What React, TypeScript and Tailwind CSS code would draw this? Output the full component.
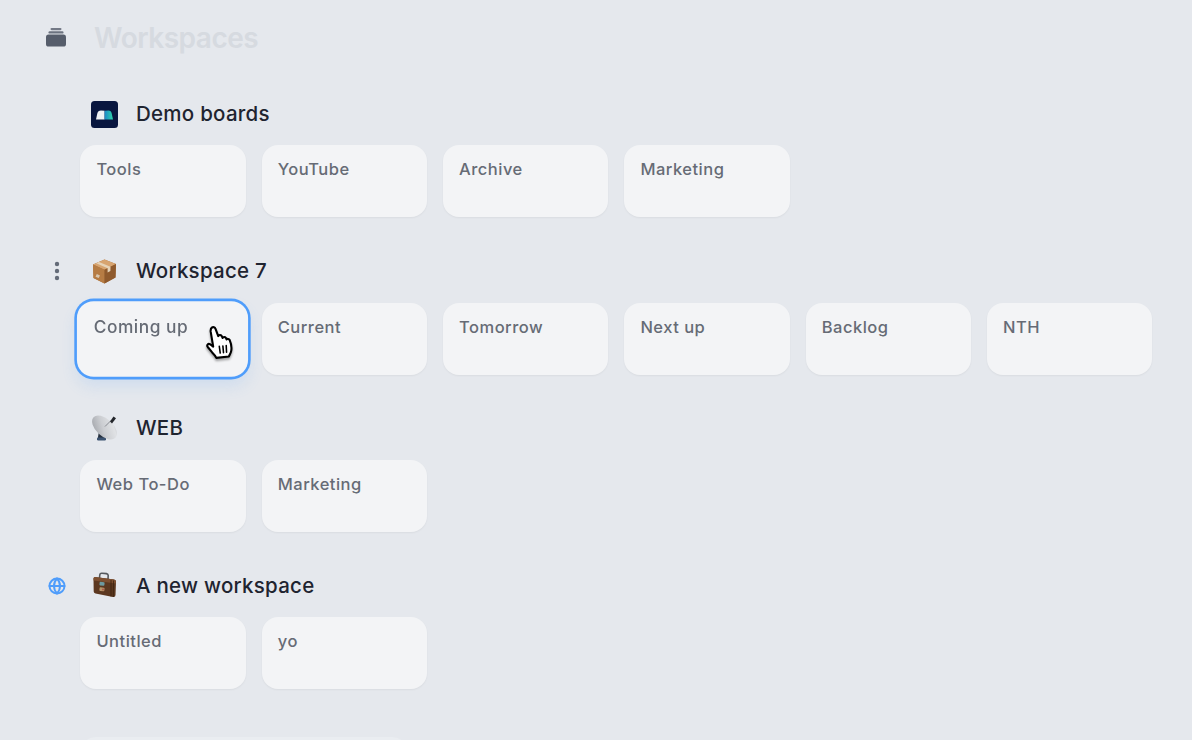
import { Globe } from 'lucide-react';
import type { ReactNode } from 'react';

const StackIcon = () => (
    <svg width="20" height="20" viewBox="0 0 20 20" className="text-[#565d6b]">
        <rect x="4.5" y="0" width="11" height="2.2" rx="1.1" fill="currentColor" opacity="0.8" />
        <rect x="2.5" y="3.2" width="15" height="2.4" rx="1.2" fill="currentColor" opacity="0.85" />
        <rect x="0" y="6.6" width="20" height="12" rx="2.6" fill="currentColor" />
    </svg>
);

const DotsIcon = () => (
    <svg width="6" height="20" viewBox="0 0 6 20" className="text-[#646b78]">
        <circle cx="3" cy="3" r="2.2" fill="currentColor" />
        <circle cx="3" cy="10" r="2.2" fill="currentColor" />
        <circle cx="3" cy="17" r="2.2" fill="currentColor" />
    </svg>
);

const BookLogo = () => (
    <svg width="27" height="27" viewBox="0 0 27 27">
        <defs>
            <linearGradient id="bookTeal" x1="0" y1="0" x2="1" y2="0">
                <stop offset="0" stopColor="#1e88c8" />
                <stop offset="1" stopColor="#2dd4a8" />
            </linearGradient>
        </defs>
        <rect width="27" height="27" rx="3.5" fill="#08163f" />
        <path d="M5 18.5 Q5.8 15 6.3 12.6 Q6.9 9.4 10 9.4 L13.6 9.8 L13.6 18.5 Z" fill="#eef1f4" />
        <path d="M13.6 9.8 L17.4 9.4 Q20.2 9.4 20.7 12.6 Q21.2 15 22 18.5 L13.6 18.5 Z" fill="url(#bookTeal)" />
    </svg>
);

const BoxEmoji = () => (
    <svg width="27" height="27" viewBox="0 0 27 27">
        <path d="M13.5 1.5 L25 6 L24.5 19.5 L13.5 25.5 L2.5 20 L2 6.5 Z" fill="#a9713d" />
        <path d="M2 6.5 L13.5 11.8 L25 6 L13.5 1.5 Z" fill="#d7a470" />
        <path d="M2 6.5 L13.5 11.8 L13.5 25.5 L2.5 20 Z" fill="#b67c44" />
        <path d="M13.5 11.8 L25 6 L24.5 19.5 L13.5 25.5 Z" fill="#8f5a2d" />
        <path d="M8 4 L19.5 8.8 L19.4 13 L16.6 14.4 L16.6 10.2 L5.2 5.2 Z" fill="#e6d3b8" />
        <rect x="5" y="16.5" width="3.5" height="3" fill="#d9c7ae" transform="rotate(25 6.7 18)" />
    </svg>
);

const DishEmoji = () => (
    <svg width="27" height="27" viewBox="0 0 27 27">
        <defs>
            <linearGradient id="dishFill" x1="0" y1="1" x2="1" y2="0">
                <stop offset="0" stopColor="#9a9da3" />
                <stop offset="0.45" stopColor="#cbcdd1" />
                <stop offset="0.8" stopColor="#e0e2e5" />
                <stop offset="1" stopColor="#b4b7bc" />
            </linearGradient>
        </defs>
        <path d="M8 16 L6.5 25 L14.5 25 L13.5 18 Z" fill="#26303e" />
        <rect x="6" y="22.5" width="9" height="3" rx="1.2" fill="#3b5270" />
        <ellipse cx="13.5" cy="12.5" rx="15" ry="8.5" transform="rotate(43 13.5 12.5)" fill="url(#dishFill)" />
        <path d="M14 11.5 L20.5 5" stroke="#7d8086" strokeWidth="0.9" />
        <path d="M19 6.5 L22.5 1.5 L25 3.3 L21 8.5 Z" fill="#23262b" />
    </svg>
);

const CaseEmoji = () => (
    <svg width="27" height="27" viewBox="0 0 27 27">
        <path d="M8.5 6 L8.8 2.8 Q9 1 11 1.2 L15.5 1.6 Q17.2 1.9 17.2 3.6 L17 7" fill="none" stroke="#55595e" strokeWidth="1.6" />
        <path d="M2.5 6.5 Q2.6 5 4 5 L23 7.5 Q25 7.9 25 9.5 L24.5 23 Q24.4 25.5 22 25 L4.5 21.5 Q2.8 21 2.7 19.5 Z" fill="#5c3820" />
        <path d="M2.5 6.5 Q2.6 5 4 5 L23 7.5 Q25 7.9 25 9.5 L24.9 11.5 L2.6 8.5 Z" fill="#7d4f30" />
        <path d="M20 8 L20 24.5 M22.5 8.5 L22.3 25" stroke="#3a220e" strokeWidth="0.8" />
        <rect x="8.5" y="10" width="5" height="3.6" rx="0.8" fill="#6d9aa0" transform="rotate(6 11 12)" />
        <rect x="8.5" y="15.5" width="5" height="3.6" rx="0.8" fill="#b59468" transform="rotate(6 11 17)" />
        <circle cx="12" cy="17.5" r="1" fill="#b0544a" />
    </svg>
);

const HandCursor = () => (
    <svg width="28" height="33" viewBox="0 0 28 33" className="drop-shadow-[0_2px_1px_rgba(0,0,0,0.35)]">
        <path
            d="M6.5 2.2 C7.8 1.2 9.4 1.8 10 3.4 L12.6 10.2 C13 9 14.9 8.8 15.8 10 L16.8 12 C17.2 10.9 19 10.7 19.8 11.9 L20.6 13.4 C21.2 12.6 22.9 12.8 23.5 14 C24.8 17 25.6 20.4 25 24 C24.6 26.4 23.6 27.6 22.8 29.6 L10.8 31 C10 29 8.4 27.4 6.8 25.8 L2.6 20.6 C1.4 19 2.8 16.8 4.8 18 L7.8 20.2 L5.4 6 C5.2 4.4 5.5 3 6.5 2.2 Z"
            fill="#fff"
            stroke="#000"
            strokeWidth="2"
            strokeLinejoin="round"
        />
        <path d="M13.6 20 L14.5 26.4 M17 19.6 L17.6 26 M20.2 19.2 L20.5 25.6" stroke="#000" strokeWidth="1.5" strokeLinecap="round" fill="none" />
    </svg>
);

type Workspace = {
    name: string;
    icon: ReactNode;
    control?: ReactNode;
    boards: string[];
};

const workspaces: Workspace[] = [
    { name: 'Demo boards', icon: <BookLogo />, boards: ['Tools', 'YouTube', 'Archive', 'Marketing'] },
    {
        name: 'Workspace 7',
        icon: <BoxEmoji />,
        control: <DotsIcon />,
        boards: ['Coming up', 'Current', 'Tomorrow', 'Next up', 'Backlog', 'NTH'],
    },
    { name: 'WEB', icon: <DishEmoji />, boards: ['Web To-Do', 'Marketing'] },
    {
        name: 'A new workspace',
        icon: <CaseEmoji />,
        control: <Globe size={18} strokeWidth={2.6} className="text-[#4f9dfb]" />,
        boards: ['Untitled', 'yo'],
    },
];

const BoardCard = ({ title, hovered }: { title: string; hovered: boolean }) => {
    if (hovered) {
        return (
            <div className="relative z-10 mx-[1px] h-[72px] scale-105 rounded-2xl bg-[#f3f4f6] px-4 py-[12px] text-[16.5px] leading-6 font-medium tracking-[0.5px] text-[#666b75] ring-[2.5px] ring-[#4f9dfb] shadow-[0_8px_14px_rgba(79,157,251,0.14)]">
                {title}
                <div className="absolute top-[23px] left-[122px]">
                    <HandCursor />
                </div>
            </div>
        );
    }
    return (
        <div className="h-[72px] rounded-2xl bg-[#f3f4f6] px-4 py-[12px] text-[16.5px] leading-6 font-medium tracking-[0.5px] text-[#666b75] shadow-[0_1px_2px_rgba(0,0,0,0.05)]">
            {title}
        </div>
    );
};

export default function App() {
    return (
        <div className="h-[740px] overflow-hidden bg-[#e5e8ed] font-['Inter',sans-serif]">
            <div className="flex h-[38px] items-center pt-[38px] pl-[46px]">
                <StackIcon />
                <h1 className="ml-[28px] text-[28px] font-semibold tracking-[-0.5px] text-[#d6dae0]">Workspaces</h1>
            </div>

            <div className="mt-[56px] flex flex-col gap-[33.93px]">
                {workspaces.map((ws) => (
                    <section key={ws.name}>
                        <div className="flex h-10 items-center pl-[46px]">
                            <div className="flex w-[22px] justify-center">{ws.control}</div>
                            <div className="ml-[23px] h-[27px] w-[27px]">{ws.icon}</div>
                            <h2 className="ml-[18px] text-[20.5px] font-medium tracking-[0.25px] text-[#1f2430]">{ws.name}</h2>
                        </div>
                        <div className="mt-[11.4px] ml-[80.4px] grid w-[1072px] grid-cols-6 gap-4">
                            {ws.boards.map((board) => (
                                <BoardCard key={board} title={board} hovered={board === 'Coming up'} />
                            ))}
                        </div>
                    </section>
                ))}
            </div>

            <div className="mt-[48px] ml-[80px] h-[72px] w-[328px] rounded-2xl bg-[#eaedf1]" />
        </div>
    );
}
